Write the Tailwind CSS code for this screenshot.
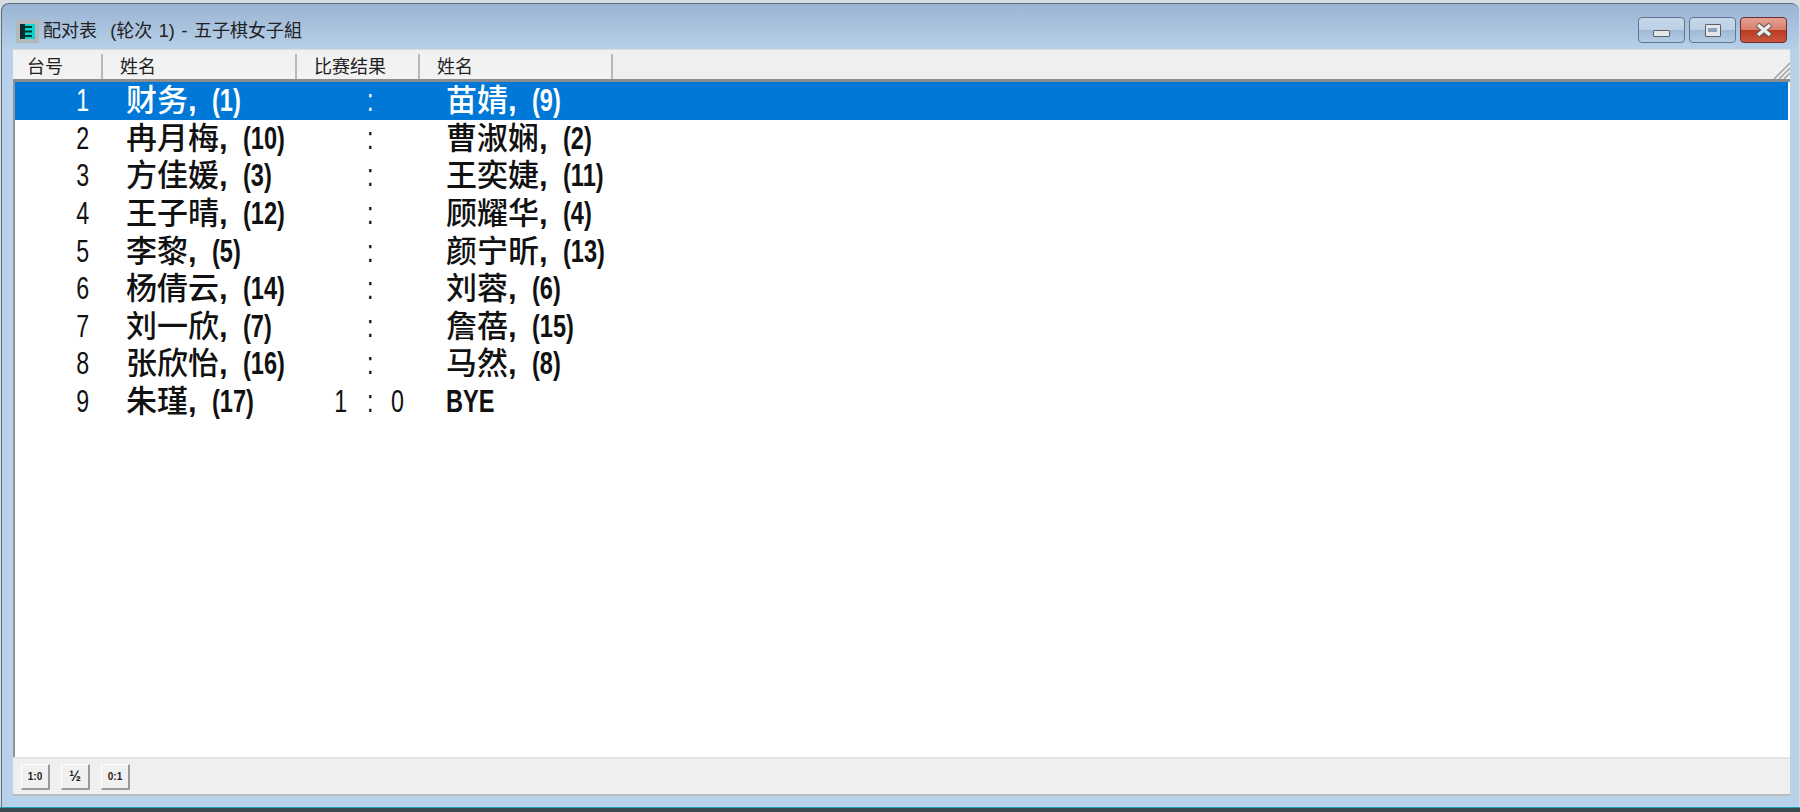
<!DOCTYPE html>
<html lang="zh">
<head>
    <meta charset="UTF-8">
    <title>配对表</title>
    <script src="https://cdn.jsdelivr.net/npm/@tailwindcss/browser@4"></script>
</head>
<body class="w-[1800px] h-[812px] overflow-hidden bg-[#3b4a50] font-['Liberation_Sans','Noto_Sans_CJK_SC',sans-serif]">
<div class="h-[808px] pt-[3px] bg-[#d8dde2] border-b border-[#1fa3b5]">
    <div class="h-full mx-[1px] rounded-t-[8px] border-t border-l border-[#5f6f80] bg-gradient-to-b from-[#9ab4d2] to-[#b9d2eb] to-[6%] flex flex-col pl-[11px] pr-[9px] pb-[11px]">
        <!-- title bar -->
        <div class="h-[45px] shrink-0 flex items-center pt-[9px] pl-[3px] pr-[3px]">
            <div class="w-[23px] h-[23px] bg-[#b4b8bb] flex items-center justify-center">
                <svg width="15" height="15" viewBox="0 0 15 15"><rect width="15" height="15" fill="#0bd6d0"/><rect width="5" height="15" fill="#0a2a2a"/><rect x="3" y="2" width="9" height="2" fill="#063530"/><rect x="3" y="6.5" width="9" height="2" fill="#063530"/><rect x="3" y="11" width="9" height="2" fill="#063530"/></svg>
            </div>
            <span class="ml-[4px] text-[18px] text-[#222] whitespace-pre [word-spacing:1.6px]">配对表  (轮次 1) - 五子棋女子組</span>
            <div class="ml-auto mb-[2px] flex gap-[4px]">
                <button class="w-[47px] h-[26px] rounded-[4px] border border-[#5f7690] bg-[linear-gradient(#c6d7e9_0%,#bdd0e5_50%,#9fb9d6_52%,#b4cbe3_100%)] flex items-end justify-center pb-[5px]">
                    <span class="w-[17px] h-[7px] rounded-[1px] bg-[#e4e7ea] border border-[#59606a]"></span>
                </button>
                <button class="w-[47px] h-[26px] rounded-[4px] border border-[#5f7690] bg-[linear-gradient(#c6d7e9_0%,#bdd0e5_50%,#9fb9d6_52%,#b4cbe3_100%)] flex items-center justify-center">
                    <span class="w-[16px] h-[13px] rounded-[1px] bg-[#e4e7ea] border border-[#59606a] flex items-center justify-center"><span class="w-[9px] h-[4px] bg-[#8aa3bf]"></span></span>
                </button>
                <button class="w-[47px] h-[26px] rounded-[4px] border border-[#6b2c38] bg-[linear-gradient(#e6a192_0%,#d9806d_48%,#bc3b1f_52%,#c9573f_100%)] flex items-center justify-center">
                    <svg width="18" height="14" viewBox="0 0 18 14"><path d="M2.5 1.5 L15.5 12.5 M15.5 1.5 L2.5 12.5" stroke="#5a5a5a" stroke-width="5.5"/><path d="M3 2 L15 12 M15 2 L3 12" stroke="#ececec" stroke-width="3.5"/></svg>
                </button>
            </div>
        </div>
        <!-- list -->
        <div class="flex-1 min-h-0 flex flex-col bg-white">
            <div class="h-[33px] shrink-0 flex bg-[#efefef] pt-[4px] border-t border-[#dddddd] border-b-[3px] border-b-[#8c8c8c] relative text-[18px] text-[#222] leading-[27px]">
                <div class="w-[90px] border-r-2 border-[#b9b9b9] pl-[14px] bg-[#f2f2f2]">台号</div>
                <div class="w-[194px] border-r-2 border-[#b9b9b9] pl-[17px] bg-[#f2f2f2]">姓名</div>
                <div class="w-[123px] border-r-2 border-[#b9b9b9] pl-[17px] bg-[#f2f2f2]">比赛结果</div>
                <div class="w-[193px] border-r-2 border-[#b9b9b9] pl-[17px] bg-[#f2f2f2]">姓名</div>
                <svg class="absolute right-0 bottom-0" width="17" height="17" viewBox="0 0 17 17"><path d="M1 17 L17 1 M6 17 L17 6 M11 17 L17 11" stroke="#a0a0a0" stroke-width="1.5"/></svg>
            </div>
            <div id="rows" class="flex-1 min-h-0 border-l-[2px] border-[#8f959b] mr-[2px] text-[#111] text-[31px]"></div>
        </div>
        <div class="h-[39px] shrink-0 bg-[#efefef] border-t-2 border-[#e4e4e4] border-b-2 border-b-[#bdbdbd] flex items-center gap-[11px] pl-[8px]">
            <button class="w-[29px] h-[26px] bg-[#f0f0f0] border-r-2 border-b-2 border-[#9a9a9a] border-t border-l border-t-white border-l-white text-[10px] font-bold text-[#222]">1:0</button>
            <button class="w-[29px] h-[26px] bg-[#f0f0f0] border-r-2 border-b-2 border-[#9a9a9a] border-t border-l border-t-white border-l-white text-[14px] font-bold text-[#222]">½</button>
            <button class="w-[29px] h-[26px] bg-[#f0f0f0] border-r-2 border-b-2 border-[#9a9a9a] border-t border-l border-t-white border-l-white text-[10px] font-bold text-[#222]">0:1</button>
        </div>
    </div>
</div>
<script>
    const pairs = [
        ['财务', '(1)', '', '', '苗婧', '(9)'],
        ['冉月梅', '(10)', '', '', '曹淑娴', '(2)'],
        ['方佳媛', '(3)', '', '', '王奕婕', '(11)'],
        ['王子晴', '(12)', '', '', '顾耀华', '(4)'],
        ['李黎', '(5)', '', '', '颜宁昕', '(13)'],
        ['杨倩云', '(14)', '', '', '刘蓉', '(6)'],
        ['刘一欣', '(7)', '', '', '詹蓓', '(15)'],
        ['张欣怡', '(16)', '', '', '马然', '(8)'],
        ['朱瑾', '(17)', '1', '0', '', 'BYE'],
    ];

    function player(name, seed) {
        const cjk = name ? `<span class="font-medium">${name}</span><span class="w-[24px] font-bold">,</span>` : '';
        return `<div class="flex items-center whitespace-nowrap">${cjk}<span class="inline-block origin-left scale-x-[.76] font-bold">${seed}</span></div>`;
    }

    document.getElementById('rows').innerHTML = pairs.map((p, i) => `
        <div class="grid grid-cols-[74px_241px_14px_47px_55px_1fr] h-[37.6px] items-center leading-[37px] ${i === 0 ? 'bg-[#0078d7] text-white' : ''}">
            <div class="text-right"><span class="inline-block origin-right scale-x-[.75]">${i + 1}</span></div>
            <div class="pl-[37px]">${player(p[0], p[1])}</div>
            <div class="text-right"><span class="inline-block origin-right scale-x-[.75]">${p[2]}</span></div>
            <div class="text-center pl-[5px]"><span class="inline-block scale-x-[.75]">:</span></div>
            <div><span class="inline-block origin-left scale-x-[.75]">${p[3]}</span></div>
            <div>${player(p[4], p[5])}</div>
        </div>`).join('');
</script>
</body>
</html>
